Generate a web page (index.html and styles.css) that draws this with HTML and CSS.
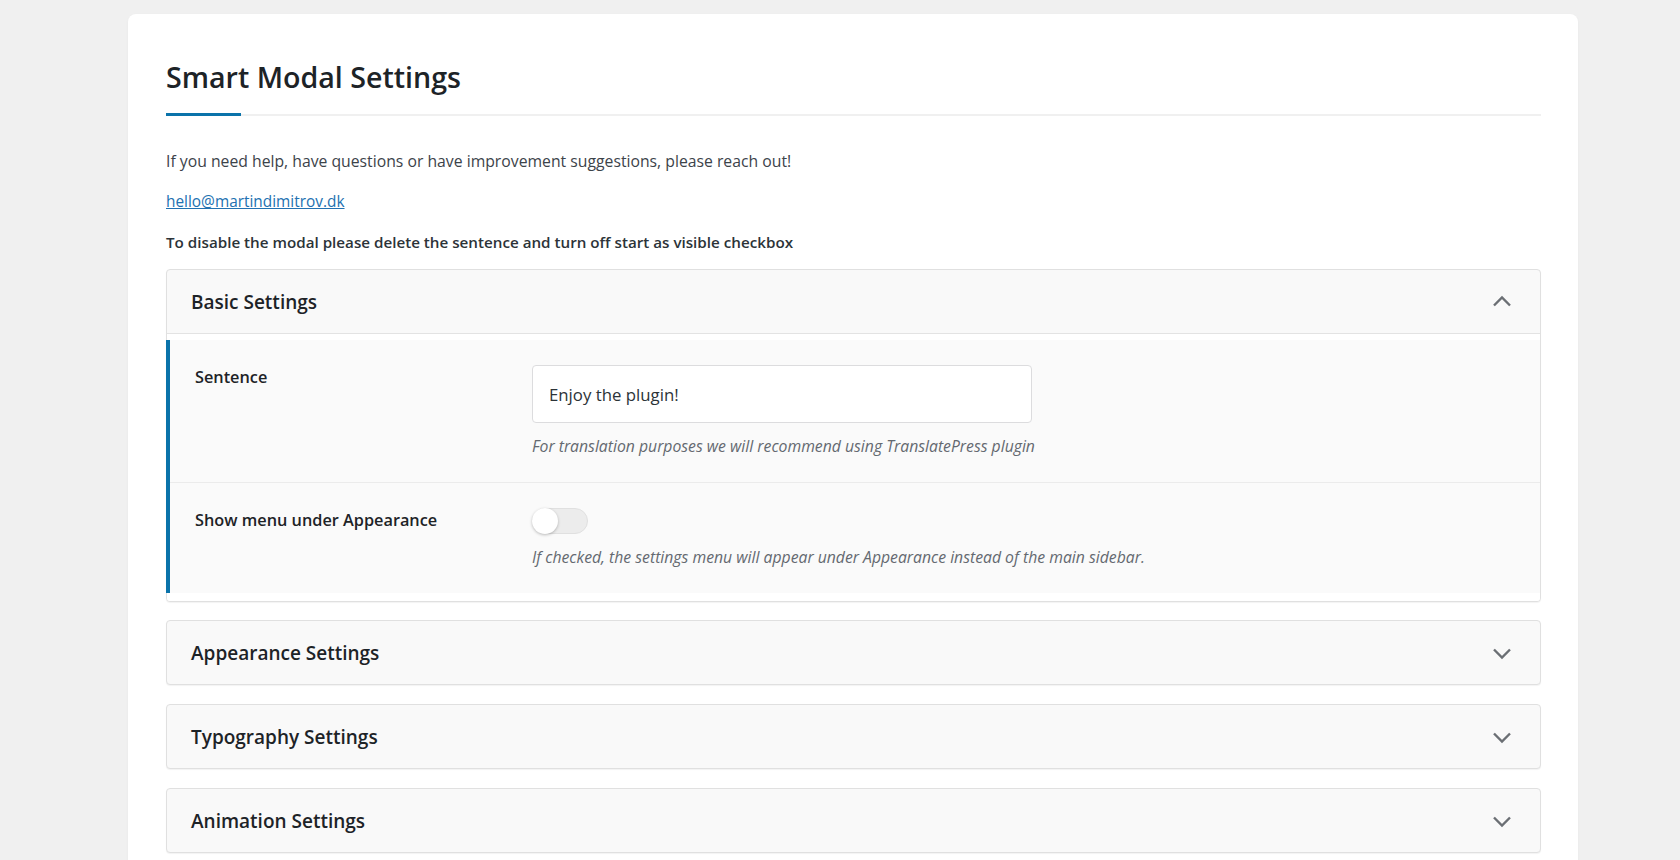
FILE: index.html
```html
<!DOCTYPE html>
<html lang="en">
<head>
<meta charset="utf-8">
<title>Smart Modal Settings</title>
<link rel="stylesheet" href="styles.css">
</head>
<body>
<div class="wrap">
  <div class="card">
    <h1 class="title">Smart Modal Settings</h1>
    <p>If you need help, have questions or have improvement suggestions, please reach out!</p>
    <p><a class="mail" href="mailto:hello@martindimitrov.dk">hello@martindimitrov.dk</a></p>
    <p class="note">To disable the modal please delete the sentence and turn off start as visible checkbox</p>

    <section class="panel open">
      <header class="panel-head">
        <h2>Basic Settings</h2>
        <svg class="chev" width="24" height="24" viewBox="0 0 24 24"><path d="M4 15.5 L12 7.5 L20 15.5"/></svg>
      </header>
      <div class="panel-body">
        <div class="fields">
          <div class="row">
            <label class="label" for="sentence">Sentence</label>
            <div class="control">
              <input id="sentence" class="text" type="text" value="Enjoy the plugin!">
              <p class="desc">For translation purposes we will recommend using TranslatePress plugin</p>
            </div>
          </div>
          <div class="row">
            <span class="label">Show menu under Appearance</span>
            <div class="control">
              <span class="toggle" role="switch" aria-checked="false"><span class="knob"></span></span>
              <p class="desc">If checked, the settings menu will appear under Appearance instead of the main sidebar.</p>
            </div>
          </div>
        </div>
      </div>
    </section>

    <section class="panel">
      <header class="panel-head">
        <h2>Appearance Settings</h2>
        <svg class="chev" width="24" height="24" viewBox="0 0 24 24"><path d="M4 8.5 L12 16.5 L20 8.5"/></svg>
      </header>
    </section>

    <section class="panel">
      <header class="panel-head">
        <h2>Typography Settings</h2>
        <svg class="chev" width="24" height="24" viewBox="0 0 24 24"><path d="M4 8.5 L12 16.5 L20 8.5"/></svg>
      </header>
    </section>

    <section class="panel">
      <header class="panel-head">
        <h2>Animation Settings</h2>
        <svg class="chev" width="24" height="24" viewBox="0 0 24 24"><path d="M4 8.5 L12 16.5 L20 8.5"/></svg>
      </header>
    </section>
  </div>
</div>
</body>
</html>
```

FILE: styles.css
```css
html, body {
  margin: 0;
  background: #f0f0f0;
}

body {
  font-family: "Open Sans", "Noto Sans", sans-serif;
  color: #3c434a;
}

.wrap {
  padding: 14px 102px 40px 128px;
}

.card {
  background: #fff;
  border-radius: 8px;
  padding: 44px 37px 40px 38px;
  box-shadow: 0 1px 3px rgba(0, 0, 0, 0.04);
}

.title {
  position: relative;
  margin: 0 0 33px;
  padding-bottom: 18px;
  border-bottom: 2px solid #f0f0f0;
  font-size: 28.6px;
  line-height: 38px;
  font-weight: 600;
  color: #1d2327;
}

.title::after {
  content: "";
  position: absolute;
  left: 0;
  bottom: -2px;
  width: 75px;
  height: 3px;
  background: #0a73aa;
}

p {
  margin: 0 0 16px;
  font-size: 15.75px;
  line-height: 24px;
}

.mail {
  font-size: 15.4px;
  color: #2271b1;
  text-decoration: underline;
}

.note {
  margin-bottom: 15px;
  font-size: 15.2px;
  font-weight: 600;
  color: #2c3338;
}

.panel {
  border: 1px solid #e0e0e0;
  border-radius: 4px;
  background: #f9f9f9;
  box-shadow: 0 1px 1px rgba(0, 0, 0, 0.05);
  margin-bottom: 19px;
}

.panel.open {
  margin-bottom: 18px;
}

.panel-head {
  display: flex;
  align-items: center;
  justify-content: space-between;
  height: 63px;
  padding: 0 26px 0 24px;
}

.panel.open .panel-head {
  border-bottom: 1px solid #e3e3e3;
}

.panel-head h2 {
  margin: 0;
  font-size: 19px;
  line-height: 26px;
  font-weight: 600;
  color: #1d2327;
}

.chev {
  display: block;
}

.chev path {
  fill: none;
  stroke: #6b6f74;
  stroke-width: 2.4;
}

.panel-body {
  background: #fff;
  border-radius: 0 0 3px 3px;
  padding: 6px 0 8px;
}

.fields {
  background: #fafafa;
  border-left: 4px solid #0a73aa;
  margin-left: -1px;
}

.row {
  display: grid;
  grid-template-columns: 337px 1fr;
  padding: 25px 25px 25px;
}

.row + .row {
  border-top: 1px solid #ebebeb;
}

.label {
  font-size: 16.3px;
  line-height: 24px;
  font-weight: 600;
  color: #1d2327;
}

.text {
  display: block;
  box-sizing: border-box;
  width: 500px;
  height: 58px;
  margin: 0;
  padding: 0 16px;
  border: 1px solid #dcdcde;
  border-radius: 4px;
  background: #fff;
  font-family: "Open Sans", "Noto Sans", sans-serif;
  font-size: 16.8px;
  color: #2c3338;
  outline: none;
}

.desc {
  margin: 12px 0 0;
  font-size: 15.75px;
  line-height: 22px;
  font-style: italic;
  color: #646970;
}

.toggle {
  display: flex;
  align-items: center;
  box-sizing: border-box;
  width: 56px;
  height: 26px;
  border-radius: 13px;
  background: #ececec;
  border: 1px solid #e0e0e0;
}

.knob {
  width: 26px;
  height: 26px;
  margin-left: -1px;
  border-radius: 50%;
  background: #fff;
  box-shadow: 0 1px 3px rgba(0, 0, 0, 0.25);
}
```
